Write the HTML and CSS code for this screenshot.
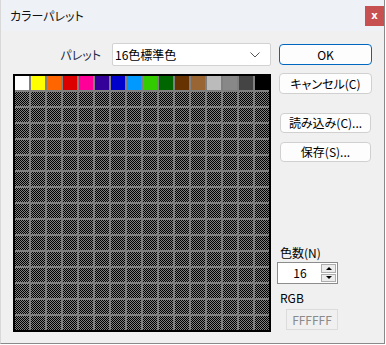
FILE: index.html
```html
<!DOCTYPE html>
<html lang="ja">
<head>
  <meta charset="UTF-8">
  <title>カラーパレット</title>
  <link rel="stylesheet" href="styles.css">
</head>

<body>
  <div class="window">
    <div class="titlebar">
      <span class="title">カラーパレット</span>
      <div class="close">x</div>
    </div>

    <div class="main">
      <div class="left">
        <div class="palette-row">
          <span class="label">パレット</span>
          <div class="combo">
            <span>16色標準色</span>
            <svg width="10" height="6" viewBox="0 0 10 6"><path d="M0.5 0.5 L5 5 L9.5 0.5" fill="none" stroke="#555" stroke-width="1"/></svg>
          </div>
        </div>
        <div class="grid"></div>
      </div>

      <div class="right">
        <div class="btn btn-ok">OK</div>
        <div class="btn btn-cancel">キャンセル(C)</div>
        <div class="btn btn-small btn-load">読み込み(C)...</div>
        <div class="btn btn-small btn-save">保存(S)...</div>

        <div class="field-label count-label">色数(N)</div>
        <div class="spin">
          <div class="spin-value">16</div>
          <div class="spin-btns">
            <div class="spin-btn"><span class="arrow-up"></span></div>
            <div class="spin-btn"><span class="arrow-down"></span></div>
          </div>
        </div>

        <div class="field-label rgb-label">RGB</div>
        <div class="rgb">FFFFFF</div>
      </div>
    </div>
  </div>

  <script>
    // 1行目は16色、残りは未使用のマス
    const colors = ['#ffffff', '#ffff00', '#ff6600', '#dd0000', '#ff0099', '#330099', '#0000cc', '#0099ff',
      '#33cc00', '#006600', '#663300', '#996633', '#bbbbbb', '#888888', '#444444', '#000000']
    const grid = document.querySelector('.grid')

    for (let i = 0; i < 256; i++) {
      const cell = document.createElement('div')
      cell.className = 'cell'
      if (i < 16) {
        cell.style.background = colors[i]
      } else {
        cell.classList.add('empty')
      }
      grid.appendChild(cell)
    }
  </script>
</body>

</html>
```

FILE: styles.css
```css
* {
  margin: 0;
  padding: 0;
  box-sizing: border-box;
}

html,
body {
  background: #fff;
}

body {
  font-family: "Noto Sans CJK JP", "Noto Sans", sans-serif;
  font-size: 12px;
  font-feature-settings: "palt";
  color: #000;
}

.window {
  width: 385px;
  height: 344px;
  background: #f0f0f0;
  border-right: 1px solid #8a8a8a;
  border-bottom: 1px solid #8a8a8a;
  border-left: 1px solid #d8d8d8;
}

.titlebar {
  height: 31px;
  background: #eef2f6;
  display: flex;
  align-items: center;
  justify-content: space-between;
  padding-left: 9px;
}

.title {
  font-size: 12px;
  color: #111;
}

.close {
  width: 19px;
  height: 20px;
  background: #c75050;
  color: #fff;
  font-family: "DejaVu Sans", sans-serif;
  font-weight: bold;
  font-size: 10px;
  line-height: 19px;
  text-align: center;
}

.main {
  display: flex;
  padding: 12px 0 0 12px;
}

.left {
  width: 258px;
}

.palette-row {
  display: flex;
  justify-content: flex-end;
  align-items: center;
  height: 23px;
}

.palette-row .label {
  margin-right: 11px;
  color: #1e2a44;
}

.combo {
  width: 159px;
  height: 23px;
  background: #fff;
  border: 1px solid #d2d2d2;
  border-radius: 2px;
  display: flex;
  align-items: center;
  justify-content: space-between;
  padding: 0 10px 0 2px;
}

.grid {
  margin-top: 8px;
  width: 258px;
  height: 258px;
  border: 2px solid #000;
  background: #808080;
  display: grid;
  grid-template-columns: repeat(16, 14px);
  grid-template-rows: repeat(16, 14px);
  gap: 2px;
}

.cell.empty {
  background: repeating-conic-gradient(#000 0 25%, #808080 0 50%) 0 0 / 2px 2px;
}

.right {
  margin-left: 8px;
  width: 94px;
  display: flex;
  flex-direction: column;
  align-items: flex-start;
}

.btn {
  width: 93px;
  height: 21px;
  background: #fdfdfd;
  border: 1px solid #d0d0d0;
  border-radius: 4px;
  text-align: center;
  line-height: 19px;
}

.btn-ok {
  margin-top: 1px;
  border-color: #0067c0;
}

.btn-cancel {
  margin-top: 8px;
}

.btn-small {
  width: 91px;
  height: 20px;
  margin-left: 1px;
  line-height: 18px;
}

.btn-load {
  margin-top: 19px;
}

.btn-save {
  margin-top: 9px;
}

.field-label {
  line-height: 16px;
  padding-left: 1px;
}

.count-label {
  margin-top: 83px;
}

.spin {
  margin-top: 1px;
  margin-left: -2px;
  width: 61px;
  height: 22px;
  background: #fff;
  border: 1px solid #8c8c8c;
  display: flex;
  justify-content: space-between;
  padding: 1px;
}

.spin-value {
  flex: 1;
  text-align: center;
  line-height: 18px;
}

.spin-btns {
  width: 15px;
  display: flex;
  flex-direction: column;
  gap: 1px;
}

.spin-btn {
  height: 9px;
  background: #ececec;
  border: 1px solid #adadad;
  display: flex;
  align-items: center;
  justify-content: center;
}

.arrow-up {
  border-left: 3px solid transparent;
  border-right: 3px solid transparent;
  border-bottom: 3px solid #000;
}

.arrow-down {
  border-left: 3px solid transparent;
  border-right: 3px solid transparent;
  border-top: 3px solid #000;
}

.rgb-label {
  margin-top: 6px;
}

.rgb {
  margin-top: 3px;
  margin-left: 7px;
  width: 52px;
  height: 21px;
  border: 1px solid #dcdcdc;
  color: #8a8a8a;
  text-align: center;
  line-height: 19px;
}
```
